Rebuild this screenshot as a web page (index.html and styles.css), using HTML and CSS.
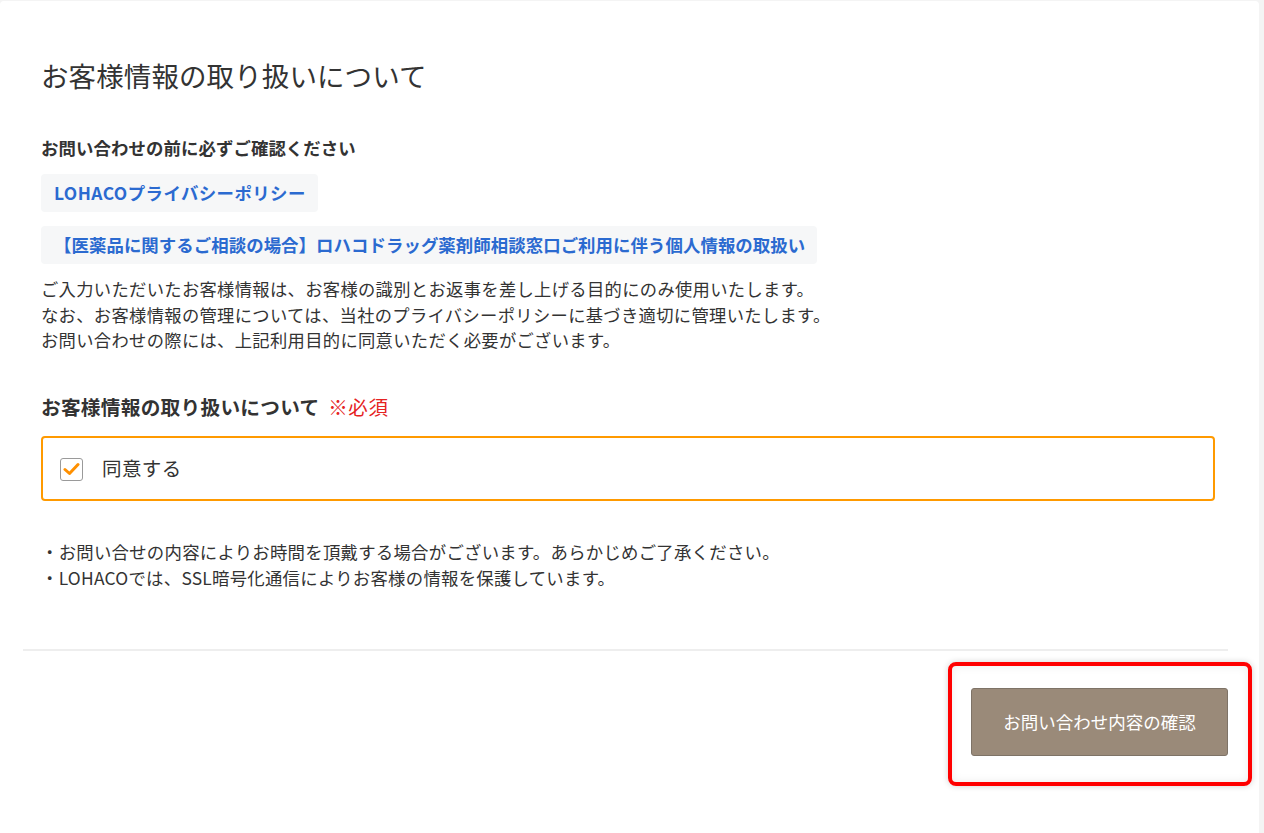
FILE: index.html
```html
<!DOCTYPE html>
<html lang="ja">
<head>
<meta charset="utf-8">
<title>お客様情報の取り扱いについて</title>
<link rel="stylesheet" href="styles.css">
</head>
<body>
<div class="card">
  <div class="content">
    <h1 class="title">お客様情報の取り扱いについて</h1>
    <h2 class="subhead">お問い合わせの前に必ずご確認ください</h2>
    <div class="links">
      <a class="link-box" href="#">LOHACOプライバシーポリシー</a>
      <a class="link-box" href="#">【医薬品に関するご相談の場合】ロハコドラッグ薬剤師相談窓口ご利用に伴う個人情報の取扱い</a>
    </div>
    <p class="para">ご入力いただいたお客様情報は、お客様の識別とお返事を差し上げる目的にのみ使用いたします。<br>なお、お客様情報の管理については、当社のプライバシーポリシーに基づき適切に管理いたします。<br>お問い合わせの際には、上記利用目的に同意いただく必要がございます。</p>
    <div class="label">お客様情報の取り扱いについて <span class="req">※必須</span></div>
    <label class="agree">
      <span class="check"><svg width="17" height="14" viewBox="0 0 17 14"><path d="M2 7.5 L6.5 11.5 L15 2.5" fill="none" stroke="#ff9000" stroke-width="3" stroke-linecap="round" stroke-linejoin="round"/></svg></span>
      <span class="agree-text">同意する</span>
    </label>
    <p class="notes">・お問い合せの内容によりお時間を頂戴する場合がございます。あらかじめご了承ください。<br>・LOHACOでは、SSL暗号化通信によりお客様の情報を保護しています。</p>
  </div>
  <div class="footer">
    <div class="btn-wrap">
      <button class="btn" type="button">お問い合わせ内容の確認</button>
      <span class="highlight"></span>
    </div>
  </div>
</div>
</body>
</html>
```
FILE: styles.css
```css
html, body {
  margin: 0;
  padding: 0;
}
body {
  background: #f4f4f4;
  padding-top: 1px;
  font-family: "Noto Sans CJK JP", "Noto Sans", sans-serif;
  color: #333;
}
.card {
  width: 1259px;
  min-height: 840px;
  background: #fff;
  border-radius: 4px;
}
.content {
  padding: 54px 44px 0 41px;
}
.title {
  margin: 0;
  font-size: 27.5px;
  line-height: 40px;
  font-weight: 400;
  letter-spacing: 0.1px;
  color: #333;
}
.subhead {
  margin: 40px 0 0;
  font-size: 17.4px;
  line-height: 26px;
  font-weight: 700;
  letter-spacing: 0.1px;
  color: #333;
}
.links {
  display: flex;
  flex-direction: column;
  align-items: flex-start;
  gap: 14px;
  margin-top: 13px;
}
.link-box {
  display: block;
  background: #f6f7f8;
  border-radius: 4px;
  padding: 6px 12px 6px 13px;
  font-size: 17.4px;
  line-height: 26px;
  font-weight: 700;
  color: #2b6ad0;
  text-decoration: none;
}
.link-box:first-child {
  letter-spacing: 0.45px;
}
.link-box:last-child {
  letter-spacing: 0.08px;
}
.para {
  margin: 12px 0 0;
  font-size: 17.3px;
  line-height: 25.5px;
  letter-spacing: 0.33px;
  color: #333;
}
.label {
  margin-top: 41px;
  font-size: 19.7px;
  line-height: 26px;
  font-weight: 700;
  letter-spacing: 0.25px;
  color: #333;
}
.req {
  font-weight: 400;
  color: #e52222;
  font-size: 19.5px;
  letter-spacing: 0.6px;
  margin-left: 4px;
}
.agree {
  margin-top: 16px;
  height: 61px;
  border: 2px solid #ff9a00;
  border-radius: 4px;
  display: flex;
  align-items: center;
  padding-left: 17px;
  gap: 19px;
}
.check {
  width: 23px;
  height: 23px;
  box-sizing: border-box;
  border: 1px solid #9a9a9a;
  border-radius: 3px;
  display: flex;
  align-items: center;
  justify-content: center;
  margin-top: 2px;
}
.agree-text {
  font-size: 19.5px;
  line-height: 26px;
  letter-spacing: 0.4px;
  color: #333;
}
.notes {
  margin: 38px 0 0;
  font-size: 17.4px;
  line-height: 26px;
  letter-spacing: 0.25px;
  color: #333;
}
.footer {
  margin: 58px 31px 0 23px;
  border-top: 2px solid #eeeeee;
  padding-top: 37px;
  display: flex;
  justify-content: flex-end;
}
.btn-wrap {
  position: relative;
}
.btn {
  display: block;
  width: 257px;
  height: 68px;
  background: #9a8a79;
  border: 1px solid #7e7367;
  border-radius: 3px;
  color: #fff;
  font-family: "Noto Sans CJK JP", "Noto Sans", sans-serif;
  font-size: 17.5px;
  padding: 0;
  cursor: pointer;
}
.highlight {
  position: absolute;
  left: -23px;
  top: -26px;
  width: 304px;
  height: 124px;
  box-sizing: border-box;
  border: 4px solid #ff0000;
  border-radius: 8px;
  box-shadow: 0 0 6px rgba(0,0,0,0.18), inset 0 0 10px rgba(0,0,0,0.08);
  pointer-events: none;
}
```
